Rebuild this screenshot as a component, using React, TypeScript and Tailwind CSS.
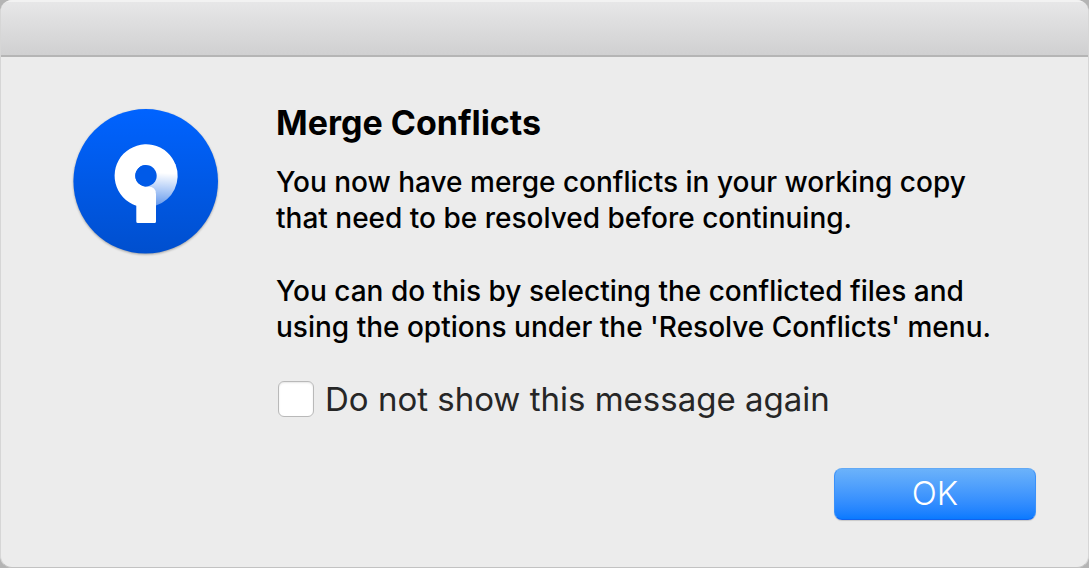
export default function App() {
  return (
    <div className="min-h-screen bg-[#b4b4b4] font-[Inter,sans-serif] text-black">
      <main className="flex min-h-screen flex-col overflow-hidden rounded-xl border-x border-b border-x-[#d6d6d6] border-b-[#c2c2c2] bg-[#ececec]">
        <header className="h-[57px] border-t-2 border-b-2 border-t-[#f2f2f2] border-b-[#b5b5b5] bg-linear-to-b from-[#e7e7e8] to-[#d0d0d1]" />
        <div className="flex flex-1 gap-[57px] pt-11 pr-[52px] pl-[72px]">
          <svg viewBox="0 0 146 146" className="mt-2 size-[146px] shrink-0 overflow-visible drop-shadow-[0_1px_1px_#00000050]" role="img" aria-label="Sourcetree">
            <defs>
              <linearGradient id="disc" x1="0" y1="0" x2="0" y2="1">
                <stop offset="0" stopColor="#0063ff" />
                <stop offset="1" stopColor="#004fce" />
              </linearGradient>
              <linearGradient id="fade" x1="91" y1="64" x2="89" y2="98" gradientUnits="userSpaceOnUse">
                <stop offset="0" stopColor="#fff" />
                <stop offset="1" stopColor="#fff" stopOpacity="0.38" />
              </linearGradient>
            </defs>
            <circle cx="72.7" cy="72.3" r="72.3" fill="url(#disc)" />
            <path d="M73 55.5V77.4Q83 78 83 87V96.6A31.5 31.5 0 0 0 102.6 55.5Z" fill="url(#fade)" />
            <path d="M102.7 56A31.5 31.5 0 1 0 63.3 96.7V112.5Q63.3 114 64.8 114H81.5Q83 114 83 112.5V85Q83 77.4 75 77.4H73A10.7 10.7 0 1 1 73 56Z" fill="#fff" />
            <circle cx="73" cy="66.7" r="10.7" fill="#005ae8" />
          </svg>
          <div className="flex-1">
            <h1 className="text-[34px] leading-[44px] font-bold">Merge Conflicts</h1>
            <div className="mt-[19px] space-y-[37px] text-[28px] leading-9 font-medium">
              <p>You now have merge conflicts in your working copy<br />that need to be resolved before continuing.</p>
              <p>You can do this by selecting the conflicted files and<br />using the options under the &#39;Resolve Conflicts&#39; menu.</p>
            </div>
            <label className="mt-8 ml-0.5 flex items-center gap-[11px] text-[33px] leading-[44px] text-[#262626]">
              <input type="checkbox" className="size-9 appearance-none rounded-md border border-[#b9b9b9] bg-white shadow-[inset_0_1px_2px_#0000001a] checked:bg-[#2b8cff]" />
              Do not show this message again
            </label>
            <div className="mt-[47px] flex justify-end">
              <button className="h-[52px] w-[202px] rounded-lg border border-t-[#62a9f5] border-x-[#3a91fa] border-b-[#1063ef] bg-linear-to-b from-[#6bb2fa] to-[#087aff] text-[33px] font-light text-white shadow-[0_1px_1px_#00000026]">OK</button>
            </div>
          </div>
        </div>
      </main>
    </div>
  );
}
